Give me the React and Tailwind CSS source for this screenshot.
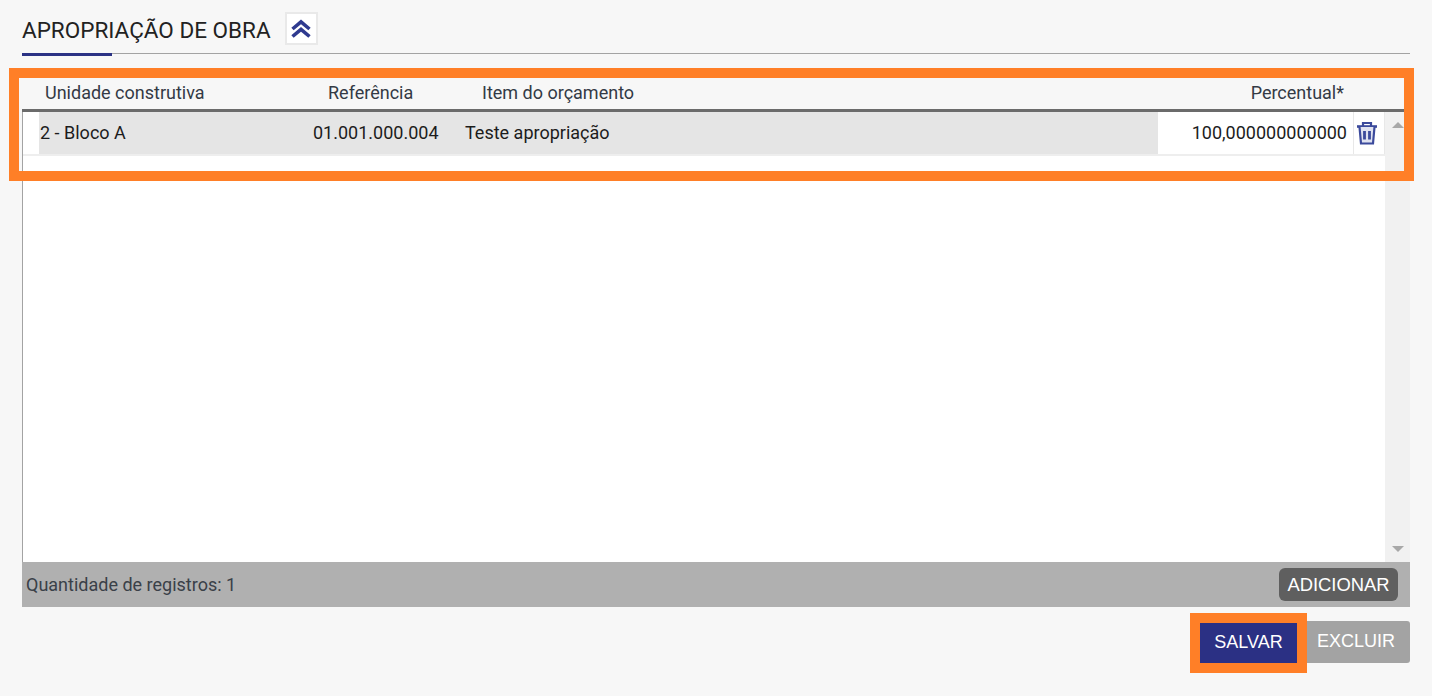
import React from "react";

const font = { fontFamily: "Roboto, sans-serif" };

const App = () => {
  return (
    <div className="relative w-[1432px] h-[696px] overflow-hidden bg-[#f7f7f7] px-[22px]" style={font}>
      {/* titulo */}
      <div className="h-[54px] border-b border-[#a3a3a3] relative">
        <div className="flex items-start">
          <span className="mt-[18px] text-[22.5px] leading-6 text-[#222222]">APROPRIAÇÃO DE OBRA</span>
          <button className="ml-[14px] mt-[12px] w-[33px] h-[33px] border-2 border-[#e9e9e9] bg-white flex items-center justify-center">
            <svg width="22" height="20" viewBox="0 0 22 20" fill="none" stroke="#2f3a8f" strokeWidth="3.6">
              <path d="M2.5 10 L11 2.8 L19.5 10" />
              <path d="M2.5 17.5 L11 10.3 L19.5 17.5" />
            </svg>
          </button>
        </div>
        <div className="absolute left-0 top-[53px] w-[90px] h-[3px] bg-[#2b3284]" />
      </div>

      {/* cabecalho da grid */}
      <div className="mt-[24px] h-[31px] pb-[2px] grid grid-cols-[306px_154px_1fr_auto] items-center text-[18px] text-[#333a45]">
        <span className="pl-[23px]">Unidade construtiva</span>
        <span>Referência</span>
        <span>Item do orçamento</span>
        <span className="pr-[66px]">Percentual*</span>
      </div>

      {/* grid */}
      <div className="h-[498px] flex flex-col border-t-[3px] border-[#6b6b6b]">
        <div className="flex flex-1 min-h-0">
          <div className="flex-1 bg-white border-l border-[#a3a3a3]">
            <div className="h-[42px] flex text-[#1c1c1c] text-[18px] border-r border-[#e8e8e8]">
              <div className="w-[16px] bg-white" />
              <div className="w-[1119px] pb-[2px] bg-[#e5e5e5] flex items-center">
                <span className="w-[274px] pl-px">2 - Bloco A</span>
                <span className="w-[152px]">01.001.000.004</span>
                <span>Teste apropriação</span>
              </div>
              <div className="w-[196px] pb-[2px] bg-white flex items-center justify-end pr-[6px] border-r border-[#e8e8e8]">
                100,000000000000
              </div>
              <div className="flex-1 flex items-center justify-center pr-[4px] pb-px">
                <svg width="22" height="24" viewBox="0 0 22 24" fill="none" stroke="#3b4a9c" strokeWidth="2.2">
                  <path d="M1 5.5 H21" strokeWidth="2.6" />
                  <path d="M7 5 V2 H15 V5" />
                  <path d="M3.5 6 L5 22.5 H17 L18.5 6" fill="#dfe2f0" />
                  <path d="M8.5 10 V18.5 M13.5 10 V18.5" strokeWidth="2.8" />
                </svg>
              </div>
            </div>
            <div className="h-[2px] bg-[#eeeeee] mt-0" />
          </div>
          <div className="w-[25px] bg-[#f1f1f1] flex flex-col justify-between items-center pt-[10px] pb-[10px]">
            <div className="w-0 h-0 border-x-[6px] border-x-transparent border-b-[6px] border-b-[#a8a8a8]" />
            <div className="w-0 h-0 border-x-[6px] border-x-transparent border-t-[6px] border-t-[#a8a8a8]" />
          </div>
        </div>
        {/* rodape */}
        <div className="h-[45px] shrink-0 bg-[#b0b0b0] flex items-center justify-between pl-[4px] pr-[12px]">
          <span className="text-[18px] text-[#3a4048]">Quantidade de registros: 1</span>
          <button className="w-[119px] h-[33px] pt-px rounded-[6px] bg-[#5f5f5f] text-white text-[18.4px] font-['Liberation_Sans',sans-serif] flex items-center justify-center">
            ADICIONAR
          </button>
        </div>
      </div>

      {/* acoes */}
      <div className="mt-[14px] flex justify-end items-start">
        <button className="relative z-10 mt-[2px] w-[97px] h-[40px] pb-[2px] bg-[#2b3084] text-white text-[18px] font-['Liberation_Sans',sans-serif] outline-[10px] outline-[#ff7f27] flex items-center justify-center">
          SALVAR
        </button>
        <button className="w-[113px] h-[42px] pl-[5px] pb-[2px] bg-[#a3a3a3] text-white text-[18px] font-['Liberation_Sans',sans-serif] rounded-r-[3px] flex items-center justify-center">
          EXCLUIR
        </button>
      </div>

      {/* destaque laranja */}
      <div className="absolute left-[9px] top-[68px] w-[1405px] h-[113px] border-[10px] border-[#ff7f27] pointer-events-none" />
    </div>
  );
};

export default App;
